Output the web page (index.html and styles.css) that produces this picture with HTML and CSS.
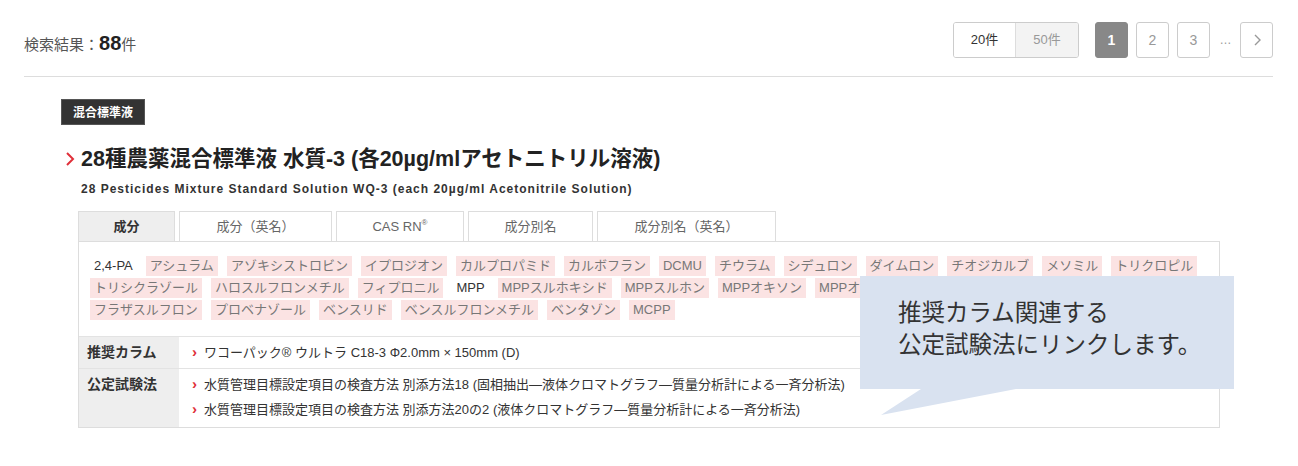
FILE: index.html
```html
<!DOCTYPE html>
<html lang="ja">
<head>
	<meta charset="UTF-8">
	<title>検索結果</title>
	<link rel="stylesheet" href="styles.css">
</head>
<body>
	<div class="wrap">
		<div class="result-bar">
			<p class="count">検索結果：<b>88</b>件</p>
			<div class="per-page">
				<span class="on">20件</span>
				<span>50件</span>
			</div>
			<ul class="pager">
				<li class="cur">1</li>
				<li>2</li>
				<li>3</li>
				<li class="dots">…</li>
				<li><svg width="8" height="12" viewBox="0 0 8 12"><path d="M2 1l5 5-5 5" fill="none" stroke="#999" stroke-width="1.4"/></svg></li>
			</ul>
		</div>

		<div class="item">
			<span class="cat">混合標準液</span>
			<h2 class="name"><svg class="arr" width="10" height="16" viewBox="0 0 10 16"><path d="M2 2l6 6-6 6" fill="none" stroke="#e0303a" stroke-width="2"/></svg>28種農薬混合標準液 水質-3 (各20µg/mlアセトニトリル溶液)</h2>
			<p class="name-en">28 Pesticides Mixture Standard Solution WQ-3 (each 20µg/ml Acetonitrile Solution)</p>

			<div class="detail">
				<ul class="tabs">
					<li class="on">成分</li>
					<li class="t2">成分（英名）</li>
					<li class="t3">CAS RN<sup>®</sup></li>
					<li class="t4">成分別名</li>
					<li class="t5">成分別名（英名）</li>
				</ul>
				<div class="panel">
					<ul class="tags">
						<li class="plain">2,4-PA</li>
						<li>アシュラム</li>
						<li>アゾキシストロビン</li>
						<li>イプロジオン</li>
						<li>カルプロパミド</li>
						<li>カルボフラン</li>
						<li>DCMU</li>
						<li>チウラム</li>
						<li>シデュロン</li>
						<li>ダイムロン</li>
						<li>チオジカルブ</li>
						<li>メソミル</li>
						<li>トリクロピル</li>
						<li>トリシクラゾール</li>
						<li>ハロスルフロンメチル</li>
						<li>フィプロニル</li>
						<li class="plain">MPP</li>
						<li>MPPスルホキシド</li>
						<li>MPPスルホン</li>
						<li>MPPオキソン</li>
						<li>MPPオキソンスルホキシド</li>
						<li>MPPオキソンスルホン</li>
						<li>フラザスルフロン</li>
						<li>プロベナゾール</li>
						<li>ベンスリド</li>
						<li>ベンスルフロンメチル</li>
						<li>ベンタゾン</li>
						<li>MCPP</li>
					</ul>
					<table class="info">
						<tr>
							<th>推奨カラム</th>
							<td>
								<ul class="links">
									<li>ワコーパック® ウルトラ C18-3 Φ2.0mm × 150mm (D)</li>
								</ul>
							</td>
						</tr>
						<tr>
							<th>公定試験法</th>
							<td>
								<ul class="links">
									<li>水質管理目標設定項目の検査方法 別添方法18 (固相抽出―液体クロマトグラフ―質量分析計による一斉分析法)</li>
									<li>水質管理目標設定項目の検査方法 別添方法20の2 (液体クロマトグラフ―質量分析計による一斉分析法)</li>
								</ul>
							</td>
						</tr>
					</table>

					<div class="callout">推奨カラム関連する<br>公定試験法にリンクします。</div>
				</div>
			</div>
		</div>
	</div>
</body>
</html>
```

FILE: styles.css
```css
*{margin:0;padding:0;box-sizing:border-box;}
body{
	background:#fff;
	color:#333;
	font-family:"Liberation Sans","Noto Sans CJK JP",sans-serif;
}
ul{list-style:none;}
.wrap{
	width:1273px;
	padding-left:24px;
}
.result-bar{
	display:flex;
	align-items:center;
	padding:22px 0 18px;
	border-bottom:1px solid #ddd;
}
.count{
	font-size:15px;
	color:#555;
	padding-top:6px;
}
.count b{
	font-size:20px;
	color:#222;
}
.per-page{
	display:flex;
	margin-left:auto;
	height:36px;
	border:1px solid #ccc;
	border-radius:3px;
	overflow:hidden;
	font-size:13px;
}
.per-page span{
	width:62px;
	line-height:34px;
	text-align:center;
	background:#f3f3f3;
	color:#999;
}
.per-page span.on{
	background:#fff;
	color:#333;
	border-right:1px solid #ddd;
}
.pager{
	display:flex;
	gap:8px;
	margin-left:16px;
}
.pager li{
	width:33px;
	height:36px;
	border:1px solid #ccc;
	border-radius:3px;
	display:flex;
	align-items:center;
	justify-content:center;
	font-size:14px;
	color:#999;
}
.pager li.cur{
	background:#888;
	border-color:#888;
	color:#fff;
	font-weight:bold;
}
.pager li.dots{
	width:14px;
	border:none;
	font-size:12px;
	letter-spacing:-1px;
}
.item{
	padding:22px 0 0 37px;
}
.cat{
	display:inline-block;
	height:26px;
	line-height:26px;
	padding:0 11px;
	background:#333;
	border:1px solid #555;
	color:#fff;
	font-size:12px;
	font-weight:bold;
}
.name{
	display:flex;
	align-items:center;
	margin-top:20px;
	font-size:21.5px;
	line-height:28px;
	color:#222;
}
.name .arr{
	margin:0 6px 0 4px;
}
.name-en{
	margin:8px 0 0 20px;
	font-size:12px;
	font-weight:bold;
	line-height:16px;
	color:#333;
	letter-spacing:1px;
}
.detail{
	margin:14px 0 0 17px;
	width:1142px;
}
.tabs{
	display:flex;
	gap:4px;
}
.tabs li{
	height:30px;
	line-height:29px;
	border:1px solid #ddd;
	border-bottom:none;
	text-align:center;
	font-size:13px;
	color:#666;
}
.tabs li.on{
	width:97px;
	background:#eee;
	color:#333;
	font-weight:bold;
}
.tabs .t2{width:153px;}
.tabs .t3{width:128px;}
.tabs .t4{width:125px;}
.tabs .t5{width:179px;}
.tabs sup{
	font-size:8px;
	vertical-align:6px;
	line-height:0;
}
.panel{
	position:relative;
	border:1px solid #ddd;
}
.tags{
	display:flex;
	flex-wrap:wrap;
	gap:2px 9px;
	padding:14px 16px 16px 11px;
}
.tags li{
	height:20px;
	line-height:20px;
	padding:0 4px;
	background:#fbe3e3;
	font-size:13px;
	color:#777;
}
.tags li.plain{
	background:none;
	color:#333;
}
.info{
	width:100%;
	border-collapse:collapse;
}
.info th{
	width:100px;
	background:#eee;
	text-align:left;
	vertical-align:top;
	padding:3px 0 0 8px;
	font-size:14px;
	line-height:24px;
	color:#333;
	border-top:1px solid #e3e3e3;
}
.info td{
	padding:3px 0 3px 13px;
	border-top:1px solid #e3e3e3;
}
.info tr:last-child td{
	padding-bottom:5px;
}
.links li{
	font-size:13px;
	line-height:24px;
	color:#333;
}
.links li::before{
	content:"›";
	display:inline-block;
	width:12px;
	color:#e0303a;
	font-weight:bold;
	font-size:15px;
}
.callout{
	position:absolute;
	left:781px;
	top:34px;
	width:374px;
	height:113px;
	padding:19px 0 0 38px;
	background:#d9e2f0;
	font-family:"Noto Sans CJK JP",sans-serif;
	font-size:23.5px;
	line-height:32px;
	color:#333;
}
.callout::after{
	content:"";
	position:absolute;
	left:21px;
	top:113px;
	width:135px;
	height:26px;
	background:#d9e2f0;
	clip-path:polygon(40px 0,135px 0,0 26px);
}
```
